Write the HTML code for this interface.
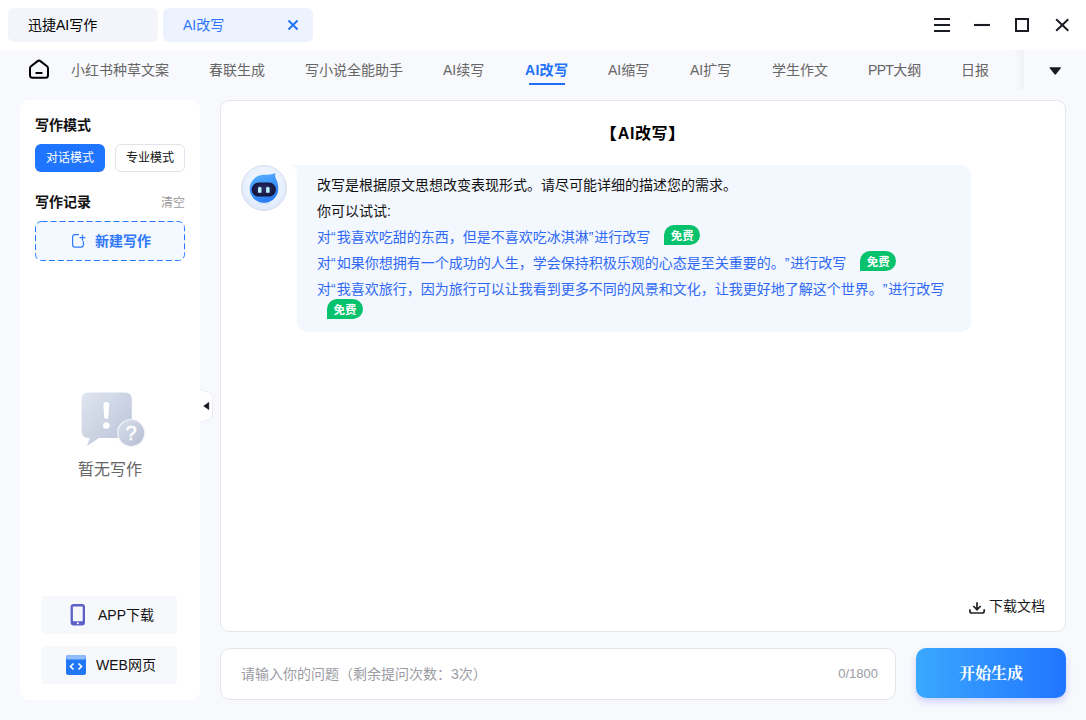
<!DOCTYPE html>
<html lang="zh-CN">
<head>
<meta charset="utf-8">
<title>迅捷AI写作</title>
<style>
*{box-sizing:border-box;margin:0;padding:0}
html,body{width:1086px;height:720px;overflow:hidden;background:#f8f9fc}
body{text-spacing-trim:space-all;font-family:"Liberation Sans","Noto Sans CJK SC",sans-serif;font-size:14px;color:#111;position:relative}
.abs{position:absolute}
.titlebar{position:absolute;left:0;top:0;width:1086px;height:50px;background:#fff}
.tab{position:absolute;top:8px;height:34px;width:150px;border-radius:6px;font-size:14px;line-height:34px;padding-left:20px;white-space:nowrap}
.tab1{left:8px;background:#f3f5fb;color:#000}
.tab2{left:163px;background:#edf3fe;color:#2d76fb}
.nav{position:absolute;left:0;top:50px;width:1086px;height:40px;background:#f8f9fc}
.nav span{position:absolute;top:0;height:40px;line-height:40px;font-size:14px;color:#666;white-space:nowrap}
.nav span.act{color:#2272f8;font-weight:bold;letter-spacing:.3px}
.sidebar{position:absolute;left:20px;top:100px;width:180px;height:600px;background:#fff;border-radius:9px}
.main{position:absolute;left:220px;top:100px;width:846px;height:532px;background:#fff;border:1px solid #e5e7ed;border-radius:9px}
.inputbox{position:absolute;left:220px;top:648px;width:676px;height:52px;background:#fff;border:1px solid #e3e5ec;border-radius:10px}
.btn{position:absolute;left:916px;top:648px;width:150px;height:50px;border-radius:10px;background:linear-gradient(90deg,#3aa8ff,#2075ff);box-shadow:0 4px 7px rgba(80,100,255,.26);color:#fff;font-weight:bold;font-size:16px;text-align:center;line-height:52px;font-family:"Liberation Serif","Noto Serif CJK SC",serif}
.t{position:absolute;white-space:nowrap}
.h{font-size:14px;font-weight:bold;line-height:22px;color:#111}
.mbtn{position:absolute;width:70px;height:28px;border-radius:6px;font-size:12px;line-height:26px;text-align:center;border:1px solid transparent}
.mbtn.on{background:#1f75fe;color:#fff}
.mbtn.off{background:#fff;border-color:#e1e4ec;color:#111}
.newbox{position:absolute;left:15px;top:121px;width:150px;height:40px}
.dl{position:absolute;left:21px;width:136px;height:38px;background:#f7f8fc;border-radius:4px}
.handle{position:absolute;left:200px;top:390px;width:12px;height:32px;background:#fff;border-radius:0 6px 6px 0}
.avatar{position:absolute;left:20px;top:64px;width:46px;height:46px}
.bubble{position:absolute;left:76px;top:64px;width:674px;height:167px;background:#f3f7fe;border-radius:0 10px 10px 10px;padding:7px 20px 0 20px}
.bubble p{font-size:14px;line-height:26px;color:#111;white-space:nowrap}
.bk{display:inline-block;transform:scaleX(1.15)}
.q{font-style:normal;letter-spacing:1px}
.bubble p.lk{color:#2f69f4}
.free{display:inline-block;vertical-align:middle;margin-left:14px;width:36px;height:20px;line-height:22px;border-radius:10px 10px 10px 0;background:#07c26c;color:#fff;font-size:11.5px;font-weight:bold;text-align:center;position:relative;top:-3px}

</style>
</head>
<body>
<div class="titlebar">
  <div class="tab tab1">迅捷AI写作</div>
  <div class="tab tab2">AI改写</div>
  <svg class="abs" style="left:287px;top:19px" width="12" height="12" viewBox="0 0 12 12"><path d="M1.5 1.5L10.5 10.5M10.5 1.5L1.5 10.5" stroke="#1f72f5" stroke-width="1.900" fill="none"/></svg>
  <svg class="abs" style="left:934px;top:17px" width="16" height="16" viewBox="0 0 16 16"><path d="M0 2H16M0 8H16M0 14H16" stroke="#1a1c24" stroke-width="2"/></svg>
  <svg class="abs" style="left:974px;top:17px" width="16" height="16" viewBox="0 0 16 16"><path d="M0 8H16" stroke="#1a1c24" stroke-width="2.100"/></svg>
  <svg class="abs" style="left:1015px;top:18px" width="14" height="14" viewBox="0 0 14 14"><rect x="1" y="1" width="12" height="12" stroke="#1a1c24" stroke-width="2" fill="none"/></svg>
  <svg class="abs" style="left:1055px;top:18px" width="15" height="14" viewBox="0 0 15 14"><path d="M1.200 1.200L13.300 12.800M13.300 1.200L1.200 12.800" stroke="#1a1c24" stroke-width="2" fill="none"/></svg>
</div>
<div class="nav">
  <svg class="abs" style="left:28px;top:8px" width="22" height="22" viewBox="0 0 22 22"><path d="M2 10.400Q2 9.100 3 8.300L9.600 3.100Q11 2 12.400 3.100L19 8.300Q20 9.100 20 10.400V17.200a2.500 2.500 0 0 1-2.500 2.500H4.500a2.500 2.500 0 0 1-2.500-2.500Z" fill="none" stroke="#000" stroke-width="2" stroke-linejoin="round"/><path d="M7.500 15H14.500" stroke="#000" stroke-width="2"/></svg>
  <span style="left:71px">小红书种草文案</span>
  <span style="left:209px">春联生成</span>
  <span style="left:305px">写小说全能助手</span>
  <span style="left:443px">AI续写</span>
  <span class="act" style="left:525px">AI改写</span>
  <span style="left:608px">AI缩写</span>
  <span style="left:690px">AI扩写</span>
  <span style="left:772px">学生作文</span>
  <span style="left:868px"><b style="font-weight:normal;letter-spacing:-0.7px">PPT</b>大纲</span>
  <span style="left:961px">日报</span>
  <div class="abs" style="left:529px;top:33px;width:36px;height:2px;background:#1f70f5"></div>
  <div class="abs" style="left:1024px;top:0;width:62px;height:40px;background:#f9fafd"></div>
  <div class="abs" style="left:1014px;top:0;width:10px;height:40px;background:linear-gradient(90deg,rgba(30,40,80,0),rgba(30,40,80,.035))"></div>
  <svg class="abs" style="left:1048px;top:16px" width="14" height="10" viewBox="0 0 14 10"><path d="M2.300 1.300H12.200Q13.400 1.300 12.700 2.300L8 8.300Q7.250 9.200 6.500 8.300L1.800 2.300Q1.100 1.300 2.300 1.300Z" fill="#1a1c24"/></svg>
</div>
<div class="sidebar">
  <div class="t h" style="left:15px;top:14px">写作模式</div>
  <div class="mbtn on" style="left:15px;top:44px">对话模式</div>
  <div class="mbtn off" style="left:95px;top:44px">专业模式</div>
  <div class="t h" style="left:15px;top:91px">写作记录</div>
  <div class="t" style="left:141px;top:93px;font-size:12px;color:#999;line-height:20px">清空</div>
  <div class="newbox">
    <svg class="abs" style="left:0;top:0" width="150" height="40" viewBox="0 0 150 40"><rect x="0.500" y="0.500" width="149" height="39" rx="6" fill="#f4f8ff" stroke="#2478ff" stroke-width="1" stroke-dasharray="6 3"/><path d="M43.500 13.600H40a2.400 2.400 0 0 0-2.400 2.400v7.800a2.400 2.400 0 0 0 2.400 2.400h6a2.400 2.400 0 0 0 2.400-2.400V20.500" fill="none" stroke="#2f7dfa" stroke-width="1.200" stroke-linecap="round"/><path d="M47.500 14v5.200M45 16.600h5" stroke="#2f7dfa" stroke-width="1.200" stroke-linecap="round"/></svg>
    <div class="t" style="left:60px;top:0;line-height:40px;font-size:14px;font-weight:bold;color:#2f78f8">新建写作</div>
  </div>
  <svg class="abs" style="left:58px;top:290px" width="70" height="60" viewBox="0 0 70 60">
    <defs><linearGradient id="g1" x1="0" y1="0" x2="1" y2="1"><stop offset="0" stop-color="#dfe5ef"/><stop offset="1" stop-color="#b9c2d8"/></linearGradient>
    <linearGradient id="g2" x1="0" y1="0" x2="1" y2="1"><stop offset="0" stop-color="#dbe0ec"/><stop offset="1" stop-color="#b4bcd3"/></linearGradient></defs>
    <path d="M9.800 2.500H47.600a6.200 6.200 0 0 1 6.200 6.200V41.800a6.200 6.200 0 0 1-6.200 6.200H21L8.900 56L11.800 48H9.800a6.200 6.200 0 0 1-6.200-6.200V8.700a6.200 6.200 0 0 1 6.200-6.200Z" fill="url(#g1)"/>
    <path d="M25.400 14.800a2.900 2.900 0 0 1 5.800 0L30.400 27a2.100 2.100 0 0 1-4.200 0Z" fill="#fff"/><circle cx="28.300" cy="35.500" r="3.300" fill="#fff"/>
    <circle cx="53.200" cy="43" r="13.500" fill="url(#g2)" stroke="#f1f3f8" stroke-width="1.200"/>
    <text x="53" y="50.200" font-size="20" font-family="Liberation Sans, sans-serif" fill="#fff" stroke="#fff" stroke-width="0.500" text-anchor="middle">?</text>
  </svg>
  <div class="t" style="left:0;width:180px;text-align:center;top:358px;font-size:16px;color:#666;line-height:24px">暂无写作</div>
  <div class="dl" style="top:496px">
    <svg class="abs" style="left:29px;top:7px" width="16" height="24" viewBox="0 0 16 24"><rect x="0.600" y="1.100" width="14.400" height="21.400" rx="3" fill="#5d61c7"/><rect x="2.900" y="3.500" width="9.800" height="14.800" rx="0.800" fill="#f7f8fc"/><circle cx="7.800" cy="20.300" r="1.050" fill="#fff"/></svg>
    <div class="t" style="left:57px;top:0;line-height:38px;font-size:14px;color:#111">APP下载</div>
  </div>
  <div class="dl" style="top:546px">
    <svg class="abs" style="left:25px;top:9px" width="20" height="20" viewBox="0 0 20 20"><rect x="0" y="0" width="20" height="20" rx="2.500" fill="#2277f5"/><rect x="0" y="0" width="20" height="4.500" rx="2" fill="#8fbcfb"/><path d="M7.500 8.500L4.500 11.500L7.500 14.500M12.500 8.500L15.500 11.500L12.500 14.500" fill="none" stroke="#fff" stroke-width="1.600"/></svg>
    <div class="t" style="left:55px;top:0;line-height:38px;font-size:14px;color:#111">WEB网页</div>
  </div>
</div>
<svg class="abs" style="left:200px;top:389px" width="14" height="34" viewBox="0 0 14 34"><path d="M0 0.500C5 2.200 8 3 10 4.200C12 5.400 12.500 6.500 12.500 8.500V25.500C12.500 27.500 12 28.600 10 29.800C8 31 5 31.800 0 33.500Z" fill="#fff"/><path d="M0 0.500C5 2.200 8 3 10 4.200C12 5.400 12.500 6.500 12.500 8.500V25.500C12.500 27.500 12 28.600 10 29.800C8 31 5 31.800 0 33.500" fill="none" stroke="#eceef4" stroke-width="1"/><path d="M8.900 13.300V20.700L3.600 17Z" fill="#15171f" stroke="#15171f" stroke-width="0.400" stroke-linejoin="round"/></svg>
<div class="main">
  <div class="t" style="left:0;width:844px;text-align:center;top:21px;font-size:16px;font-weight:bold;line-height:24px;letter-spacing:.6px;color:#000"><span class="bk" style="margin-right:1px">【</span>AI改写<span class="bk" style="margin-left:1px">】</span></div>
  <div class="avatar">
    <svg width="46" height="46" viewBox="0 0 46 46">
      <defs><radialGradient id="av" cx="0.500" cy="0.450" r="0.550"><stop offset="0" stop-color="#f3f8ff"/><stop offset="0.700" stop-color="#e9f2fe"/><stop offset="1" stop-color="#dce8fa"/></radialGradient>
      <linearGradient id="bd" x1="0.200" y1="0" x2="0.600" y2="1"><stop offset="0" stop-color="#58b0ff"/><stop offset="0.550" stop-color="#3b93fb"/><stop offset="1" stop-color="#2a78f2"/></linearGradient>
      <radialGradient id="vs" cx="0.500" cy="0.450" r="0.600"><stop offset="0" stop-color="#2c2c70"/><stop offset="1" stop-color="#121433"/></radialGradient></defs>
      <circle cx="23" cy="23" r="22.500" fill="url(#av)" stroke="#d3dae7" stroke-width="0.900"/>
      <ellipse cx="23" cy="38.200" rx="7" ry="1.300" fill="#a9cefb" opacity="0.450"/>
      <path d="M23 9.800C27.500 9.800 31.300 9.600 34.500 8C33.700 10.500 34.200 12.500 35.400 14.700C36.700 17.300 37.300 20.500 37.300 23.800A14.300 14 0 1 1 23 9.800Z" fill="url(#bd)"/>
      <rect x="10.600" y="17.600" width="24.400" height="14" rx="7" fill="url(#vs)"/>
      <path d="M17 23.600a1.750 1.750 0 0 1 3.500 0V27.800H17Z" fill="#bdf4ff"/><path d="M25.100 23.600a1.750 1.750 0 0 1 3.500 0V27.800H25.100Z" fill="#bdf4ff"/>
    </svg>
  </div>
  <svg class="abs" style="left:67px;top:64px" width="10" height="10" viewBox="0 0 10 10"><path d="M0 0H10V10H9A9 9 0 0 0 0 0Z" fill="#f3f7fe"/></svg>
  <div class="bubble">
    <p>改写是根据原文思想改变表现形式。请尽可能详细的描述您的需求。</p>
    <p>你可以试试:</p>
    <p class="lk">对<i class="q">“</i>我喜欢吃甜的东西，但是不喜欢吃冰淇淋<i class="q">”</i>进行改写<span class="free">免费</span></p>
    <p class="lk">对<i class="q">“</i>如果你想拥有一个成功的人生，学会保持积极乐观的心态是至关重要的。<i class="q">”</i>进行改写<span class="free">免费</span></p>
    <p class="lk">对<i class="q">“</i>我喜欢旅行，因为旅行可以让我看到更多不同的风景和文化，让我更好地了解这个世界。<i class="q">”</i>进行改写<br><span class="free" style="margin-left:10px;top:-7px">免费</span></p>
  </div>
  <svg class="abs" style="left:748px;top:498px" width="17" height="16" viewBox="0 0 17 16"><path d="M8 3.300V10.400M4.300 7L8 10.700L11.700 7" fill="none" stroke="#222" stroke-width="1.700"/><path d="M0.900 10.300V12a2 2 0 0 0 2 2H13.200a2 2 0 0 0 2-2V10.300" fill="none" stroke="#222" stroke-width="1.700"/></svg>
  <div class="t" style="left:768px;top:494px;font-size:14px;line-height:22px;color:#1a1a1a">下载文档</div>
</div>
<div class="inputbox">
  <div class="t" style="left:20px;top:0;line-height:50px;font-size:14px;color:#9b9ba4">请输入你的问题（剩余提问次数：3次）</div>
  <div class="t" style="right:17px;top:0;line-height:50px;font-size:13px;color:#9b9ba4">0/1800</div>
</div>
<div class="btn">开始生成</div>
</body>
</html>
